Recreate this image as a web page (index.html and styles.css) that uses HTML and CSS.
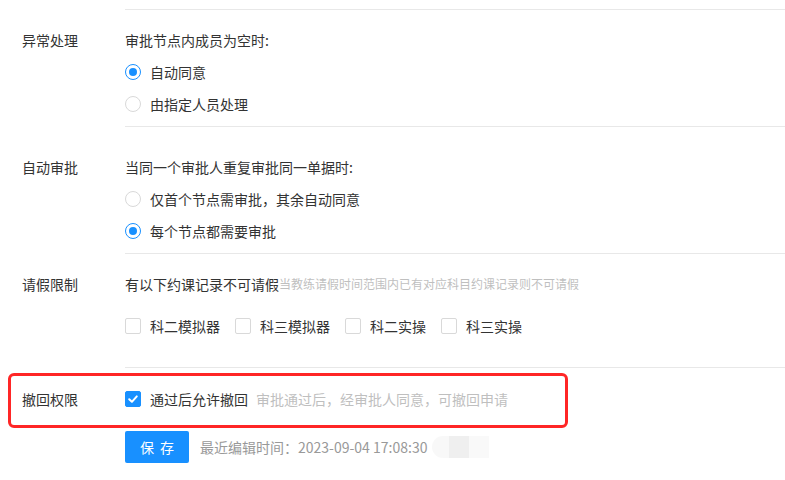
FILE: index.html
```html
<!DOCTYPE html>
<html lang="zh-CN">
<head>
<meta charset="UTF-8">
<meta name="viewport" content="width=device-width,initial-scale=1">
<title>审批设置</title>
<link rel="stylesheet" href="styles.css">
</head>
<body>

<div class="form">
  <div class="divider"></div>

  <!-- 异常处理 -->
  <div class="row row--first">
    <div class="label">异常处理</div>
    <div class="body">
      <div class="title">审批节点内成员为空时:</div>
      <label class="opt"><span class="radio is-on"></span>自动同意</label>
      <label class="opt"><span class="radio"></span>由指定人员处理</label>
    </div>
  </div>

  <!-- 自动审批 -->
  <div class="row row--loose">
    <div class="label">自动审批</div>
    <div class="body">
      <div class="title">当同一个审批人重复审批同一单据时:</div>
      <label class="opt"><span class="radio"></span>仅首个节点需审批，其余自动同意</label>
      <label class="opt"><span class="radio is-on"></span>每个节点都需要审批</label>
    </div>
  </div>

  <!-- 请假限制 -->
  <div class="row row--first">
    <div class="label">请假限制</div>
    <div class="body body--tall">
      <div class="title">有以下约课记录不可请假<span class="hint-sm">当教练请假时间范围内已有对应科目约课记录则不可请假</span></div>
      <div class="checks">
        <label class="chk"><span class="box"></span>科二模拟器</label>
        <label class="chk"><span class="box"></span>科三模拟器</label>
        <label class="chk"><span class="box"></span>科二实操</label>
        <label class="chk"><span class="box"></span>科三实操</label>
      </div>
    </div>
  </div>

  <!-- 撤回权限 -->
  <div class="row row--flagged">
    <div class="label">撤回权限</div>
    <div class="body body--plain">
      <div class="title">
        <label class="chk"><span class="box is-on">
          <svg width="12" height="12" viewBox="0 0 12 12"><polyline points="2.2,6.2 4.9,8.8 9.8,3.4" fill="none" stroke="#fff" stroke-width="2" stroke-linecap="round" stroke-linejoin="round"/></svg>
        </span>通过后允许撤回</label>
        <span class="hint">审批通过后，经审批人同意，可撤回申请</span>
      </div>
    </div>
  </div>

  <div class="actions">
    <button class="btn">保存</button>
    <span class="meta">最近编辑时间：2023-09-04 17:08:30</span>
    <span class="blur"></span>
  </div>
</div>

</body>
</html>
```

FILE: styles.css
```css
/* ------------- BASE ------------- */
:root{
  --blue:#1890ff;
  --line:#e8e8e8;
  --text:#333;
  --muted:#bfbfbf;
}
*{box-sizing:border-box}
body{
  margin:0;background:#fff;color:var(--text);
  font-family:"Noto Sans CJK SC","Liberation Sans",sans-serif;
  font-size:14px;line-height:22px;
}

.divider{margin:9px 0 0 125px;border-top:1px solid var(--line)}

/* Rows */
.row{display:grid;grid-template-columns:125px 1fr}
.label{padding:19px 0 0 22px}
.body{padding:19px 0 6px;border-bottom:1px solid var(--line)}
.row--loose .label,.row--loose .body{padding-top:29px}
.body--tall{padding-bottom:25px}
.body--plain{border-bottom:none;padding:20px 0 0}
.row--flagged .label{padding-top:20px}
.title{display:flex;align-items:center}

/* Radio */
.opt{display:flex;align-items:center;height:32px;margin-top:5px}
.opt + .opt{margin-top:0}
.radio{
  width:16px;height:16px;margin-right:9px;border-radius:50%;
  border:1px solid #d9d9d9;background:#fff;position:relative;flex:none;
}
.radio.is-on{border-color:var(--blue)}
.radio.is-on:after{
  content:"";position:absolute;left:3px;top:3px;width:8px;height:8px;
  border-radius:50%;background:var(--blue);
}

/* Checkbox */
.checks{display:flex;align-items:center;height:32px;margin-top:15px}
.chk{display:flex;align-items:center;margin-right:15px}
.box{
  width:16px;height:16px;margin-right:9px;border:1px solid #d9d9d9;
  border-radius:2px;background:#fff;flex:none;
  display:flex;align-items:center;justify-content:center;
}
.box.is-on{background:var(--blue);border-color:var(--blue)}
.row--flagged .chk{margin-right:8px}

.hint{color:var(--muted)}
.hint-sm{color:var(--muted);font-size:12px}

/* Highlight annotation */
.row--flagged{position:relative}
.row--flagged:after{
  content:"";position:absolute;left:8px;top:5px;width:554px;height:49px;
  border:3px solid #ff2626;border-radius:6px;pointer-events:none;
}

/* Actions */
.actions{display:flex;align-items:center;margin:21px 0 0 125px}
.btn{
  width:64px;height:32px;border:none;border-radius:2px;background:var(--blue);
  color:#fff;font:inherit;font-size:14px;padding:0 0 0 6px;letter-spacing:6px;cursor:pointer;
}
.meta{margin-left:11px;color:#999}
.blur{
  width:57px;height:22px;margin-left:5px;border-radius:11px 0 0 11px;
  background:linear-gradient(90deg,#f8f8f8 0 17px,#efefef 17px 37px,#f9f9f9 37px);
}
```
